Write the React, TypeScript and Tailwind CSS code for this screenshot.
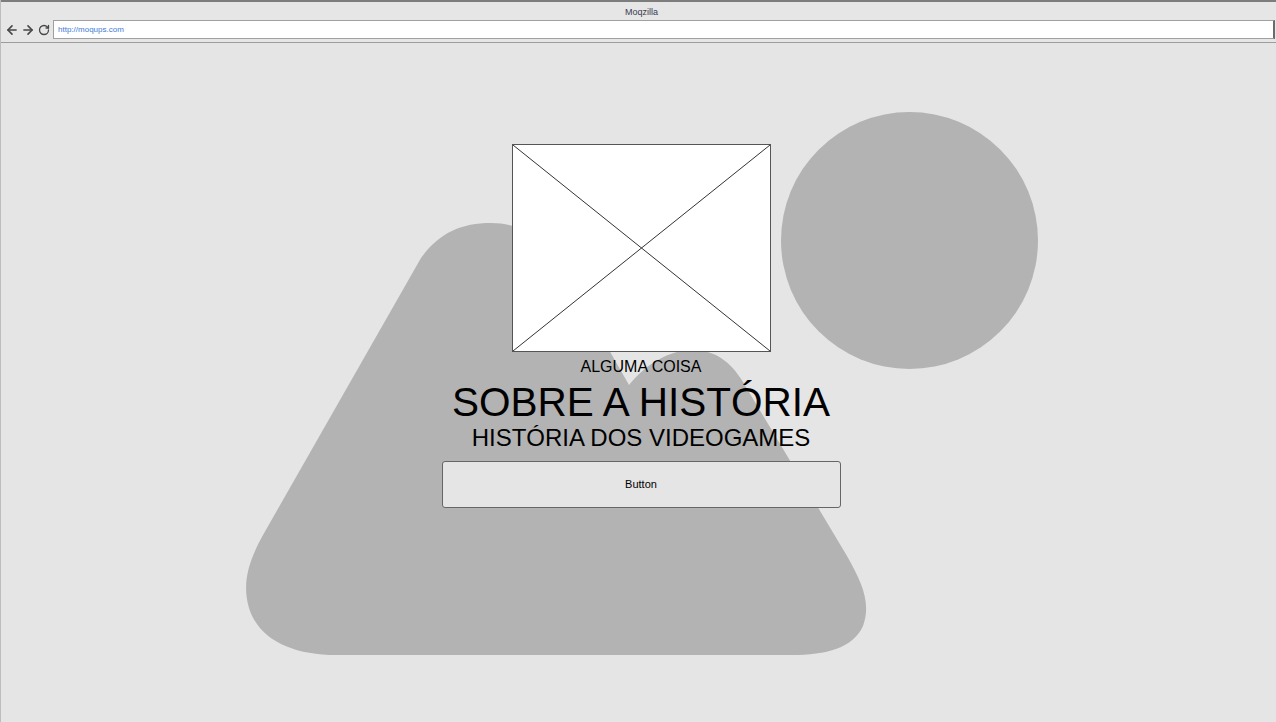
import React from 'react';
import { ArrowLeft, ArrowRight, RotateCw } from 'lucide-react';

const font = { fontFamily: '"Liberation Sans", Arial, sans-serif' };

const BrowserBar: React.FC = () => (
  <div className="h-[43px] border-t-2 border-[#7d7d7d] border-b border-b-[#9c9c9c] bg-[#e6e6e6] flex flex-col">
    <div className="h-[18px] flex items-center justify-center pt-[3px] text-[9px] text-[#3b3b4f] pl-[6px]">Moqzilla</div>
    <div className="flex items-center h-[19px]">
      <div className="flex items-center w-[52px] pl-[4px] gap-[2px] text-[#474747]">
        <ArrowLeft size={14} strokeWidth={2.8} />
        <ArrowRight size={14} strokeWidth={2.8} />
        <RotateCw size={12} strokeWidth={2.6} className="ml-[1px]" />
      </div>
      <div className="flex-1 h-[19px] bg-white border border-[#a0a0a0] border-r-2 border-r-[#6b6b6b] mr-[1px] flex items-center pl-[4px] text-[8px] text-[#3d7bd9]">
        http://moqups.com
      </div>
    </div>
  </div>
);

const Placeholder: React.FC = () => (
  <div className="w-[259px] h-[208px] bg-white border border-[#555555]">
    <svg width="257" height="206" viewBox="0 0 257 206" className="block">
      <line x1="0" y1="0" x2="257" y2="206" stroke="#333333" strokeWidth="1" />
      <line x1="257" y1="0" x2="0" y2="206" stroke="#333333" strokeWidth="1" />
    </svg>
  </div>
);

const Backdrop: React.FC = () => (
  <svg className="absolute left-0 top-[-43px] pointer-events-none" width="1276" height="722" viewBox="0 0 1276 722">
    <circle cx="908.5" cy="240.5" r="128.5" fill="#b3b3b3" />
    <path
      d="M 490 223 C 520 223 540 238 558 262 L 628 385 C 645 364 668 350 692 350 C 714 350 730 362 742 382 L 846 556 C 862 584 870 604 862 626 C 852 648 826 655 790 655 L 335 655 C 292 655 258 640 248 608 C 241 584 247 562 262 535 L 420 258 C 438 233 460 223 490 223 Z"
      fill="#b3b3b3"
    />
  </svg>
);

export default function App() {
  return (
    <div className="w-[1276px] h-[722px] overflow-hidden bg-[#e5e5e5] border-l border-[#bdbdbd]" style={font}>
      <BrowserBar />
      <main className="relative h-[679px]">
        <Backdrop />
        <div className="relative flex flex-col items-center pt-[101px] pl-[5px] text-black">
          <Placeholder />
          <div className="mt-[7px] text-[16px] leading-none">ALGUMA COISA</div>
          <h1 className="mt-[7px] text-[40.5px] leading-none font-normal">SOBRE A HISTÓRIA</h1>
          <h2 className="mt-[3px] text-[24px] leading-none font-normal">HISTÓRIA DOS VIDEOGAMES</h2>
          <button className="mt-[11px] w-[399px] h-[47px] rounded-[3px] border border-[#666666] bg-[#e5e5e5] text-[11px] text-black">
            Button
          </button>
        </div>
      </main>
    </div>
  );
}
